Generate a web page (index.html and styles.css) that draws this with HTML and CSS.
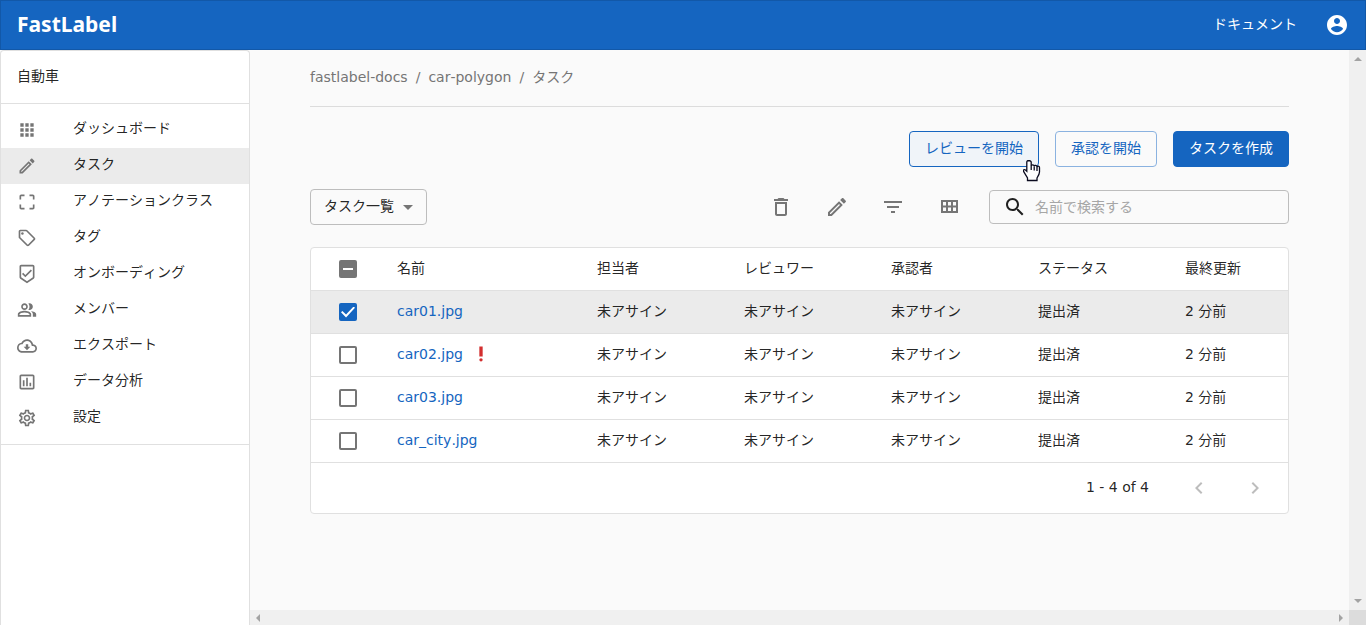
FILE: index.html
```html
<!DOCTYPE html>
<html lang="ja">
<head>
<meta charset="utf-8">
<title>FastLabel</title>
<link rel="stylesheet" href="styles.css">
</head>
<body>
<header class="topbar">
  <a class="brand" href="#">FastLabel</a>
  <nav class="topnav">
    <a class="doc-link" href="#">ドキュメント</a>
    <button class="icon-btn" aria-label="アカウント"><svg class="icon" viewBox="0 0 24 24"><path d="M12 2C6.480 2 2 6.480 2 12s4.480 10 10 10 10-4.480 10-10S17.520 2 12 2zm0 3c1.660 0 3 1.340 3 3s-1.340 3-3 3-3-1.340-3-3 1.340-3 3-3zm0 14.200c-2.500 0-4.710-1.280-6-3.220.030-1.990 4-3.080 6-3.080 1.990 0 5.970 1.090 6 3.080-1.290 1.940-3.500 3.220-6 3.220z"/></svg></button>
  </nav>
</header>
<div class="shell">
  <aside class="sidebar">
    <div class="workspace">自動車</div>
    <nav class="menu">
      <a class="menu-item" href="#"><svg class="icon small" viewBox="0 0 24 24"><path d="M4 8h4V4H4v4zm6 12h4v-4h-4v4zm-6 0h4v-4H4v4zm0-6h4v-4H4v4zm6 0h4v-4h-4v4zm6-10v4h4V4h-4zm-6 4h4V4h-4v4zm6 6h4v-4h-4v4zm0 6h4v-4h-4v4z"/></svg><span>ダッシュボード</span></a>
      <a class="menu-item active" href="#"><svg class="icon small" viewBox="0 0 24 24"><path d="M14.060 9.020l.92.92L5.920 19H5v-.92l9.060-9.060M17.660 3c-.25 0-.51.1-.7.29l-1.830 1.830 3.750 3.750 1.830-1.830c.39-.39.39-1.020 0-1.410l-2.340-2.340c-.2-.2-.45-.29-.71-.29zm-3.600 3.190L3 17.250V21h3.750L17.810 9.940l-3.750-3.750z"/></svg><span>タスク</span></a>
      <a class="menu-item" href="#"><svg class="icon small" viewBox="0 0 24 24"><path d="M3 5v4h2V5h4V3H5c-1.100 0-2 .9-2 2zm2 10H3v4c0 1.100.9 2 2 2h4v-2H5v-4zm14 4h-4v2h4c1.100 0 2-.9 2-2v-4h-2v4zm0-16h-4v2h4v4h2V5c0-1.100-.9-2-2-2z"/></svg><span>アノテーションクラス</span></a>
      <a class="menu-item" href="#"><svg class="icon small" viewBox="0 0 24 24"><path d="M21.410 11.580l-9-9C12.050 2.220 11.550 2 11 2H4c-1.100 0-2 .9-2 2v7c0 .55.22 1.050.59 1.420l9 9c.36.36.86.58 1.410.58s1.050-.22 1.410-.59l7-7c.37-.36.59-.86.59-1.410s-.23-1.060-.59-1.420zM13 20.010L4 11V4h7v-.01l9 9-7 7.020z"/><circle cx="6.500" cy="6.500" r="1.500"/></svg><span>タグ</span></a>
      <a class="menu-item" href="#"><svg class="icon small" viewBox="0 0 24 24"><path d="M19 1H5c-1.100 0-1.990.9-1.990 2L3 15.930c0 .69.35 1.300.88 1.660L12 23l8.110-5.410c.53-.36.88-.97.88-1.660L21 3c0-1.100-.9-2-2-2zm-7 19.600l-7-4.660V3h14v12.930l-7 4.670zm-2-7.420l-2.590-2.580L6 12l4 4 8-8-1.420-1.420z"/></svg><span>オンボーディング</span></a>
      <a class="menu-item" href="#"><svg class="icon small" viewBox="0 0 24 24"><path d="M16.670 13.130C18.040 14.060 19 15.320 19 17v3h4v-3c0-2.180-3.570-3.470-6.330-3.870zM15 12c2.210 0 4-1.790 4-4s-1.790-4-4-4c-.47 0-.91.1-1.330.24C14.500 5.270 15 6.580 15 8s-.5 2.730-1.330 3.760c.42.14.86.24 1.330.24zM9 12c2.210 0 4-1.790 4-4s-1.790-4-4-4-4 1.790-4 4 1.790 4 4 4zm0-6c1.100 0 2 .9 2 2s-.9 2-2 2-2-.9-2-2 .9-2 2-2zM9 13c-2.670 0-8 1.340-8 4v3h16v-3c0-2.660-5.330-4-8-4zm6 5H3v-.99C3.200 16.290 6.300 15 9 15s5.800 1.290 6 2v1z"/></svg><span>メンバー</span></a>
      <a class="menu-item" href="#"><svg class="icon small" viewBox="0 0 24 24"><path d="M19.350 10.040C18.670 6.590 15.640 4 12 4 9.110 4 6.600 5.640 5.350 8.040 2.340 8.360 0 10.910 0 14c0 3.310 2.690 6 6 6h13c2.760 0 5-2.240 5-5 0-2.640-2.050-4.780-4.650-4.960zM19 18H6c-2.210 0-4-1.790-4-4 0-2.050 1.530-3.760 3.560-3.970l1.070-.11.5-.95C8.080 7.140 9.940 6 12 6c2.620 0 4.880 1.860 5.390 4.430l.3 1.500 1.530.11c1.560.1 2.780 1.410 2.780 2.960 0 1.650-1.350 3-3 3zm-5.550-8h-2.900v3H8l4 4 4-4h-2.550z"/></svg><span>エクスポート</span></a>
      <a class="menu-item" href="#"><svg class="icon small" viewBox="0 0 24 24"><path d="M19 3H5c-1.100 0-2 .9-2 2v14c0 1.100.9 2 2 2h14c1.100 0 2-.9 2-2V5c0-1.100-.9-2-2-2zm0 16H5V5h14v14zM7 10h2v7H7zm4-3h2v10h-2zm4 6h2v4h-2z"/></svg><span>データ分析</span></a>
      <a class="menu-item" href="#"><svg class="icon small" viewBox="0 0 24 24"><path d="M19.430 12.980c.04-.32.07-.64.07-.98 0-.34-.03-.66-.07-.98l2.110-1.650c.19-.15.24-.42.12-.64l-2-3.460c-.09-.16-.26-.25-.44-.25-.06 0-.12.01-.17.03l-2.490 1c-.52-.4-1.080-.73-1.690-.98l-.38-2.650C14.460 2.180 14.250 2 14 2h-4c-.25 0-.46.18-.49.42l-.38 2.650c-.61.25-1.170.59-1.690.98l-2.490-1c-.06-.02-.12-.03-.18-.03-.17 0-.34.09-.43.25l-2 3.460c-.13.22-.07.49.12.64l2.110 1.650c-.04.32-.07.65-.07.98 0 .33.03.66.07.98l-2.110 1.650c-.19.15-.24.42-.12.64l2 3.460c.09.16.26.25.44.25.06 0 .12-.01.17-.03l2.490-1c.52.4 1.080.73 1.690.98l.38 2.650c.03.24.24.42.49.42h4c.25 0 .46-.18.49-.42l.38-2.650c.61-.25 1.170-.59 1.690-.98l2.490 1c.06.02.12.03.18.03.17 0 .34-.09.43-.25l2-3.460c.12-.22.07-.49-.12-.64l-2.110-1.650zm-1.980-1.710c.04.31.05.52.05.73 0 .21-.02.43-.05.73l-.14 1.130.89.7 1.080.84-.7 1.210-1.270-.51-1.040-.42-.9.68c-.43.32-.84.56-1.250.73l-1.060.43-.16 1.130-.2 1.350h-1.400l-.19-1.350-.16-1.130-1.060-.43c-.43-.18-.83-.41-1.230-.71l-.91-.7-1.060.43-1.270.51-.7-1.210 1.080-.84.89-.7-.14-1.130c-.03-.31-.05-.54-.05-.74s.02-.43.05-.73l.14-1.130-.89-.7-1.080-.84.7-1.210 1.270.51 1.040.42.9-.68c.43-.32.84-.56 1.250-.73l1.060-.43.16-1.130.2-1.350h1.390l.19 1.350.16 1.130 1.060.43c.43.18.83.41 1.230.71l.91.7 1.060-.43 1.270-.51.7 1.210-1.070.85-.89.7.14 1.130zM12 8c-2.210 0-4 1.790-4 4s1.790 4 4 4 4-1.790 4-4-1.790-4-4-4zm0 6c-1.100 0-2-.9-2-2s.9-2 2-2 2 .9 2 2-.9 2-2 2z"/></svg><span>設定</span></a>
    </nav>
  </aside>
  <main class="content">
    <nav class="crumbs">
      <a href="#">fastlabel-docs</a><span>/</span><a href="#">car-polygon</a><span>/</span><a href="#">タスク</a>
    </nav>
    <div class="actions">
      <button class="btn outlined hovered">レビューを開始<svg class="pointer" viewBox="0 0 18 23"><path d="M5.500 1.500c-1 0-1.700.7-1.700 1.700v9L2.500 11c-.7-.6-1.500-.5-1.900 0-.4.500-.2 1.100.1 1.700l3.800 6.300V21.500h9.500v-2.500c1.300-2 2.500-4 2.500-6V8.500c0-1.500-2-2-2.500-.5 0-2-2.300-2.200-2.800-.8-.2-1.700-2.700-1.900-3-.4V3.200c0-1-.9-1.700-2.700-1.700z"/><path class="pointer-lines" d="M8.200 6.500v4.500M11.200 7.500v4M14 8v4"/></svg></button>
      <button class="btn outlined">承認を開始</button>
      <button class="btn filled">タスクを作成</button>
    </div>
    <div class="toolbar">
      <div class="picker">
        <select aria-label="表示"><option>タスク一覧</option></select>
        <svg class="icon" viewBox="0 0 24 24"><path d="M7 10l5 5 5-5z"/></svg>
      </div>
      <div class="tools">
        <button class="icon-btn" aria-label="削除"><svg class="icon" viewBox="0 0 24 24"><path d="M6 19c0 1.100.9 2 2 2h8c1.100 0 2-.9 2-2V7H6v12zM8 9h8v10H8V9zm7.500-5l-1-1h-5l-1 1H5v2h14V4z"/></svg></button>
        <button class="icon-btn" aria-label="編集"><svg class="icon" viewBox="0 0 24 24"><path d="M14.060 9.020l.92.92L5.920 19H5v-.92l9.060-9.060M17.660 3c-.25 0-.51.1-.7.29l-1.830 1.830 3.750 3.750 1.830-1.830c.39-.39.39-1.020 0-1.410l-2.340-2.340c-.2-.2-.45-.29-.71-.29zm-3.600 3.190L3 17.250V21h3.750L17.810 9.940l-3.750-3.750z"/></svg></button>
        <button class="icon-btn" aria-label="絞り込み"><svg class="icon" viewBox="0 0 24 24"><path d="M10 18h4v-2h-4v2zM3 6v2h18V6H3zm3 7h12v-2H6v2z"/></svg></button>
        <button class="icon-btn" aria-label="グリッド表示"><svg class="icon" viewBox="0 0 24 24"><path d="M4 5v13h17V5H4zm10 2v3.500h-3V7h3zM6 7h3v3.500H6V7zm0 9v-3.500h3V16H6zm5 0v-3.500h3V16h-3zm8 0h-3v-3.500h3V16zm-3-5.500V7h3v3.500h-3z"/></svg></button>
      </div>
      <label class="search">
        <svg class="icon" viewBox="0 0 24 24"><path d="M15.500 14h-.79l-.28-.27C15.410 12.590 16 11.110 16 9.500 16 5.910 13.090 3 9.500 3S3 5.910 3 9.500 5.910 16 9.500 16c1.610 0 3.090-.59 4.230-1.570l.27.28v.79l5 4.990L20.490 19l-4.990-5zm-6 0C7.010 14 5 11.990 5 9.500S7.010 5 9.500 5 14 7.010 14 9.500 11.990 14 9.500 14z"/></svg>
        <input type="text" placeholder="名前で検索する" aria-label="名前で検索する">
      </label>
    </div>
    <section class="card">
      <table class="tasks">
        <colgroup><col class="c-check"><col class="c-name"><col class="c-mid"><col class="c-mid"><col class="c-mid"><col class="c-mid"><col></colgroup>
        <thead>
          <tr><th><input type="checkbox" class="tick partial" aria-label="すべて選択"></th><th>名前</th><th>担当者</th><th>レビュワー</th><th>承認者</th><th>ステータス</th><th>最終更新</th></tr>
        </thead>
        <tbody>
          <tr class="selected"><td><input type="checkbox" class="tick" checked aria-label="car01.jpg"></td><td><a href="#">car01.jpg</a></td><td>未アサイン</td><td>未アサイン</td><td>未アサイン</td><td>提出済</td><td>2 分前</td></tr>
          <tr><td><input type="checkbox" class="tick" aria-label="car02.jpg"></td><td><div class="flagged"><a href="#">car02.jpg</a><svg class="icon small alert" viewBox="0 0 24 24"><circle cx="12" cy="19" r="2"/><path d="M10 3h4v12h-4z"/></svg></div></td><td>未アサイン</td><td>未アサイン</td><td>未アサイン</td><td>提出済</td><td>2 分前</td></tr>
          <tr><td><input type="checkbox" class="tick" aria-label="car03.jpg"></td><td><a href="#">car03.jpg</a></td><td>未アサイン</td><td>未アサイン</td><td>未アサイン</td><td>提出済</td><td>2 分前</td></tr>
          <tr><td><input type="checkbox" class="tick" aria-label="car_city.jpg"></td><td><a href="#">car_city.jpg</a></td><td>未アサイン</td><td>未アサイン</td><td>未アサイン</td><td>提出済</td><td>2 分前</td></tr>
        </tbody>
      </table>
      <footer class="pager">
        <span class="range">1 - 4 of 4</span>
        <button class="icon-btn" disabled aria-label="前へ"><svg class="icon" viewBox="0 0 24 24"><path d="M15.410 16.590L10.830 12l4.580-4.590L14 6l-6 6 6 6 1.410-1.410z"/></svg></button>
        <button class="icon-btn" disabled aria-label="次へ"><svg class="icon" viewBox="0 0 24 24"><path d="M8.590 16.590L13.170 12 8.590 7.410 10 6l6 6-6 6-1.410-1.410z"/></svg></button>
      </footer>
    </section>
  </main>
  <div class="scroll vertical"><svg viewBox="0 0 8 4"><path d="M0 4l4-4 4 4z"/></svg><svg viewBox="0 0 8 4"><path d="M0 0l4 4 4-4z"/></svg></div>
  <div class="scroll horizontal"><svg viewBox="0 0 4 8"><path d="M4 0L0 4l4 4z"/></svg><svg viewBox="0 0 4 8"><path d="M0 0l4 4-4 4z"/></svg></div>
  <div class="scroll-corner"></div>
</div>
</body>
</html>
```
FILE: styles.css
```css
* { box-sizing: border-box; }

body {
  display: flex;
  flex-direction: column;
  height: 100vh;
  margin: 0;
  overflow: hidden;
  background: #fafafa;
  color: rgba(0, 0, 0, 0.87);
  font: 14px/20px "DejaVu Sans", "Noto Sans CJK JP", sans-serif;
  font-kerning: none;
}

a { color: inherit; text-decoration: none; }
button, input, select { font: inherit; font-kerning: inherit; color: inherit; }

.icon { display: block; flex: none; width: 24px; height: 24px; fill: currentColor; }
.icon.small { width: 20px; height: 20px; }
.icon-btn { padding: 0; border: 0; background: none; }

/* Header */
.topbar {
  display: flex;
  flex: none;
  align-items: center;
  justify-content: space-between;
  height: 50px;
  padding: 0 16px;
  border: 1px solid #1258a8;
  background: #1565c0;
  color: #fff;
}
.brand {
  padding-bottom: 2px;
  font-family: "Noto Sans", sans-serif;
  font-size: 21px;
  font-weight: 700;
  line-height: 28px;
}
.topnav { display: flex; align-items: center; gap: 28px; }
.doc-link { padding-bottom: 3px; }

/* Frame */
.shell {
  display: grid;
  flex: 1;
  grid-template: minmax(0, 1fr) 15px / 250px minmax(0, 1fr) 17px;
  min-height: 0;
}

/* Sidebar */
.sidebar {
  grid-row: 1 / 3;
  border: 1px solid #e0e0e0;
  border-bottom: 0;
  border-radius: 4px 4px 0 0;
  background: #fff;
}
.workspace { padding: 15px 16px 17px; border-bottom: 1px solid #e0e0e0; }
.menu { padding: 8px 0; border-bottom: 1px solid #e0e0e0; }
.menu-item {
  display: flex;
  align-items: center;
  gap: 36px;
  height: 36px;
  padding: 0 16px;
}
.menu-item span { padding-bottom: 4px; }
.menu-item .icon { color: #757575; }
.menu-item.active { background: #ebebeb; }

/* Main area */
.content { min-width: 0; padding: 0 60px; overflow: hidden; }
.crumbs {
  display: flex;
  gap: 8px;
  padding: 17px 0 19px;
  border-bottom: 1px solid #dcdcdc;
  color: #757575;
}
.actions { display: flex; justify-content: flex-end; gap: 16px; padding: 24px 0 22px; }
.btn {
  position: relative;
  height: 36px;
  padding: 0 15px 3px;
  border: 1px solid #1565c0;
  border-radius: 4px;
}
.outlined { border-color: #8ab2e0; background: transparent; color: #1565c0; }
.hovered { border-color: #1565c0; background: #f0f4f9; }
.filled { background: #1565c0; color: #fff; }
.pointer {
  position: absolute;
  right: -3px;
  bottom: -16px;
  width: 18px;
  height: 23px;
  fill: #fff;
  stroke: #0a0a1e;
  stroke-width: 1.3;
}
.pointer .pointer-lines { fill: none; }

.toolbar { display: flex; align-items: center; padding-bottom: 22px; }
.picker {
  display: grid;
  align-items: center;
  border: 1px solid #bdbdbd;
  border-radius: 4px;
}
.picker select {
  grid-area: 1 / 1;
  height: 34px;
  padding: 0 32px 2px 13px;
  border: 0;
  background: transparent;
  appearance: none;
}
.picker .icon { grid-area: 1 / 1; justify-self: end; margin-right: 6px; color: #757575; pointer-events: none; }
.tools { display: flex; gap: 32px; margin: 0 28px 0 auto; color: #757575; }
.search {
  display: flex;
  align-items: center;
  gap: 8px;
  width: 300px;
  height: 34px;
  padding: 0 13px;
  border: 1px solid #bdbdbd;
  border-radius: 4px;
}
.search input { flex: 1; min-width: 0; padding: 0; border: 0; outline: 0; background: none; }
.search input::placeholder { color: #a6a6a6; opacity: 1; }

/* Task table */
.card { border: 1px solid #e0e0e0; border-radius: 4px; background: #fff; }
.tasks { width: 100%; border-collapse: separate; border-spacing: 0; table-layout: fixed; }
.c-check { width: 70px; }
.c-name { width: 200px; }
.c-mid { width: 147px; }
.tasks th, .tasks td {
  height: 43px;
  padding: 0 16px 3px;
  border-bottom: 1px solid #e0e0e0;
  font-weight: 400;
  text-align: left;
}
.tasks th:first-child, .tasks td:first-child { padding: 0 0 0 28px; }
.tasks a { color: #1565c0; }
.selected { background: #ebebeb; }
.flagged { display: flex; align-items: center; gap: 8px; }
.alert { color: #d32f2f; }
.tick {
  display: grid;
  place-content: center;
  width: 18px;
  height: 18px;
  margin: 0;
  border: 2px solid #757575;
  border-radius: 2px;
  appearance: none;
}
.tick.partial { background: #757575; }
.tick.partial::before { content: ""; width: 10px; height: 2px; background: #fff; }
.tick:checked { border-color: #1565c0; background: #1565c0; }
.tick:checked::before {
  content: "";
  width: 14px;
  height: 11px;
  background: #fff;
  clip-path: polygon(0 52%, 10% 40%, 36% 72%, 90% 0, 100% 12%, 36% 100%);
}
.pager {
  display: flex;
  align-items: center;
  justify-content: flex-end;
  gap: 32px;
  height: 50px;
  padding-right: 21px;
}
.range { padding-bottom: 2px; margin-right: 6px; }
.pager .icon-btn { color: #bdbdbd; }

/* Scroll tracks */
.scroll { display: flex; align-items: center; justify-content: space-between; background: #f0f0f0; }
.scroll svg { fill: #a3a3a3; }
.vertical { flex-direction: column; padding: 7px 0; }
.vertical svg { width: 8px; height: 4px; }
.horizontal { padding: 0 6px; }
.horizontal svg { width: 4px; height: 8px; }
.scroll-corner { background: #dcdcdc; }
```
